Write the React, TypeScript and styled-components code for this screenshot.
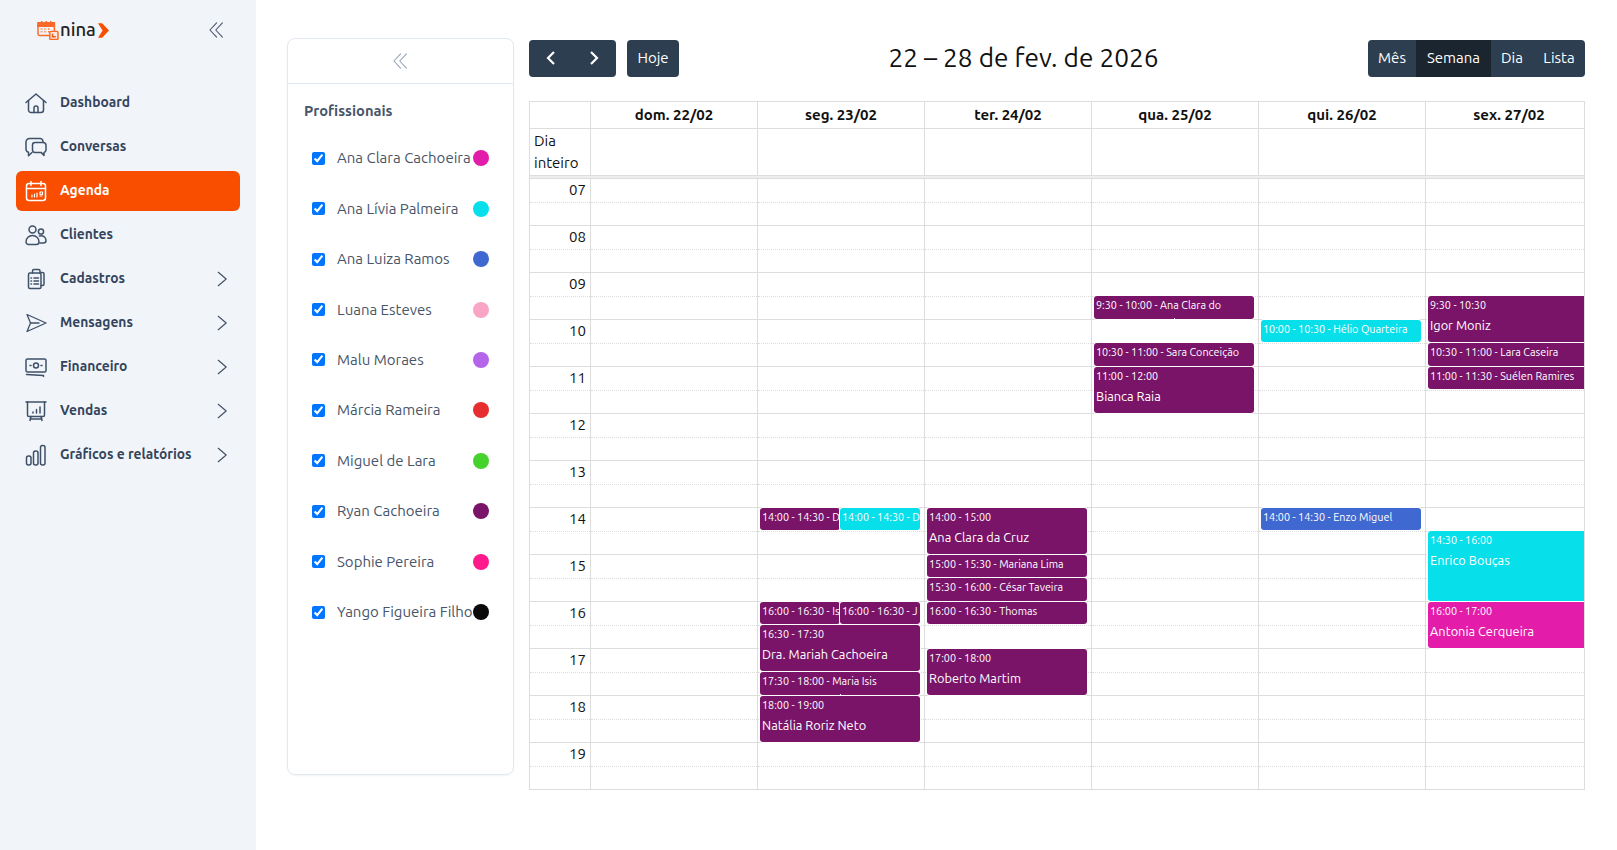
import React from 'react'
import styled, { createGlobalStyle } from 'styled-components'

const HOUR = 47
const FONT = `"Ubuntu", "Noto Sans", sans-serif`
const PURPLE = '#7a1469'
const CYAN = '#07dfea'
const BLUE = '#3f68d1'
const PINK = '#e31caa'

const GlobalStyle = createGlobalStyle`
  html, body {
    margin: 0;
    padding: 0;
    background: #fff;
    font-family: ${FONT};
  }
  * {
    box-sizing: border-box;
  }
`
const Shell = styled.div`
  display: flex;
  min-height: 100vh;
`
const Sidebar = styled.aside`
  width: 256px;
  flex-shrink: 0;
  background: #f1f5f9;
  padding: 0 16px;
`
const SideTop = styled.div`
  display: flex;
  align-items: center;
  justify-content: space-between;
  height: 60px;
  padding: 0 13px 0 21px;
  margin-bottom: 22.5px;
`
const Logo = styled.div`
  display: flex;
  align-items: center;
  gap: 2px;
  color: #222;
  font-size: 18.5px;
  font-weight: 500;
  line-height: 1;
  span {
    margin-left: -1px;
    padding-bottom: 2px;
  }
`
const Nav = styled.nav`
  display: flex;
  flex-direction: column;
  gap: 4px;
`
const NavRow = styled.div<{ $active?: boolean }>`
  display: flex;
  align-items: center;
  gap: 12px;
  height: 40px;
  padding: 0 8px;
  border-radius: 6px;
  font-size: 13.8px;
  font-weight: 600;
  color: ${(p) => (p.$active ? '#fff' : '#33445c')};
  background: ${(p) => (p.$active ? '#f94d00' : 'transparent')};
  svg {
    flex-shrink: 0;
  }
`
const NavLabel = styled.span`
  flex: 1;
  padding-bottom: 2px;
`
const Main = styled.main`
  flex: 1;
  display: flex;
  align-items: flex-start;
  gap: 15px;
  padding: 38px 32px 0 31px;
`
const Panel = styled.section`
  width: 227px;
  height: 737px;
  flex-shrink: 0;
  border: 1px solid #e2e8f0;
  border-radius: 8px;
  box-shadow: 0 1px 2px rgba(15, 23, 42, 0.05);
`
const PanelHead = styled.div`
  display: flex;
  align-items: center;
  justify-content: center;
  height: 45px;
  border-bottom: 1px solid #e2e8f0;
`
const PanelTitle = styled.h3`
  margin: 0;
  padding: 16px 16px 0;
  height: 49px;
  font-size: 14.7px;
  line-height: 21px;
  font-weight: 600;
  color: #475569;
`
const ProList = styled.ul`
  list-style: none;
  margin: 0;
  padding: 0 24px;
`
const ProRow = styled.li`
  display: flex;
  align-items: center;
  gap: 12px;
  height: 50.45px;
  font-size: 15px;
  color: #475569;
  input {
    margin: 0;
    width: 13px;
    height: 13px;
    flex-shrink: 0;
  }
`
const ProName = styled.span`
  flex: 1;
  white-space: nowrap;
  min-width: 0;
  padding-bottom: 1px;
`
const ProDot = styled.span<{ $color: string }>`
  width: 16px;
  height: 16px;
  flex-shrink: 0;
  border-radius: 50%;
  background: ${(p) => p.$color};
`
const Calendar = styled.div`
  flex: 1;
  min-width: 0;
  padding-top: 2px;
`
const Toolbar = styled.div`
  display: flex;
  align-items: center;
  justify-content: space-between;
  height: 37px;
  margin-bottom: 24px;
`
const ToolGroup = styled.div`
  display: flex;
  gap: 11px;
`
const BtnGroup = styled.div`
  display: flex;
  border-radius: 4px;
  overflow: hidden;
`
const Btn = styled.button<{ $active?: boolean; $w: number; $round?: boolean }>`
  display: flex;
  align-items: center;
  justify-content: center;
  width: ${(p) => p.$w}px;
  height: 37px;
  padding: 0 0 2px;
  border: 0;
  border-radius: ${(p) => (p.$round ? '4px' : '0')};
  font-family: ${FONT};
  font-size: 15px;
  color: #fff;
  background: ${(p) => (p.$active ? '#1a252f' : '#2c3e50')};
`
const Title = styled.h2`
  margin: 0 0 2px;
  font-size: 26.25px;
  font-weight: 400;
  color: #111;
`
const Table = styled.div`
  border: 1px solid #ddd;
  color: #111;
`
const Row = styled.div<{ $h: number; $line?: boolean }>`
  display: grid;
  grid-template-columns: 61px repeat(5, 167px) 1fr;
  height: ${(p) => p.$h}px;
  border-bottom: ${(p) => (p.$line ? '1px solid #ddd' : '0')};
`
const HeadCell = styled.div`
  display: flex;
  align-items: center;
  justify-content: center;
  padding-bottom: 1px;
  border-right: 1px solid #ddd;
  font-size: 15px;
  font-weight: 700;
  &:last-child {
    padding-left: 8px;
    border-right: 0;
  }
`
const AllDayCell = styled.div`
  border-right: 1px solid #ddd;
  &:last-child {
    border-right: 0;
  }
`
const AllDayLabel = styled(AllDayCell)`
  padding: 1px 4px;
  font-size: 15px;
  line-height: 22px;
`
const Divider = styled.div`
  height: 3px;
  background: #eee;
  border-top: 1px solid #ddd;
`
const Body = styled.div`
  display: grid;
  grid-template-columns: 61px repeat(5, 167px) 1fr;
  margin-top: 0.3px;
`
const Slot = styled.div<{ $half: boolean }>`
  height: ${HOUR / 2}px;
  border-top: 1px ${(p) => (p.$half ? 'dotted' : 'solid')} #ddd;
`
const TimeCol = styled.div`
  border-right: 1px solid #ddd;
`
const TimeSlot = styled(Slot)`
  padding-right: 4px;
  text-align: right;
  font-size: 15px;
  line-height: 22px;
`
const DayCol = styled.div`
  position: relative;
  overflow: hidden;
  border-right: 1px solid #ddd;
  &:last-child {
    border-right: 0;
  }
`
const Ev = styled.div<{ $color: string; $tick?: boolean }>`
  position: absolute;
  overflow: hidden;
  padding: 0 2px;
  border-radius: 3px;
  box-shadow: 0 0 0 1px #fff;
  color: #fff;
  background: ${(p) => p.$color};
  white-space: nowrap;
  &::after {
    content: '';
    display: ${(p) => (p.$tick ? 'block' : 'none')};
    position: absolute;
    left: 50%;
    bottom: 0;
    width: 1px;
    height: 1px;
    background: #fff;
  }
`
const EvTime = styled.div`
  font-size: 10.8px;
  line-height: 18px;
`
const EvName = styled.div`
  font-size: 12.8px;
  line-height: 21px;
  margin-top: 1px;
`

const Icon: React.FC<{ children: React.ReactNode; color?: string; size?: number; w?: number }> = ({
  children,
  color = '#3f5069',
  size = 24,
  w = 1.5,
}) => (
  <svg
    width={size}
    height={size}
    viewBox="0 0 24 24"
    fill="none"
    stroke={color}
    strokeWidth={w}
    strokeLinecap="round"
    strokeLinejoin="round"
  >
    {children}
  </svg>
)

const HomeIcon = () => (
  <Icon>
    <path d="M2 11.500 12 3l10 8.500" />
    <path d="M4.500 9.500V19a2.500 2.500 0 0 0 2.500 2.500h10a2.500 2.500 0 0 0 2.500-2.500V9.500" />
    <path d="M10 21.500V17a2 2 0 0 1 4 0v4.500" />
  </Icon>
)
const ChatIcon = () => (
  <Icon>
    <path d="M19 7V6.500A3 3 0 0 0 16 3.500H5.500A3.500 3.500 0 0 0 2 7v7a3.500 3.500 0 0 0 2.500 3.300v3.400l3.500-3.200" />
    <path d="M11 7.500h8A3 3 0 0 1 22 10.500v4.500a2.500 2.500 0 0 1-2 2.400v3l-3-3h-6A2.500 2.500 0 0 1 8.500 15v-5A2.500 2.500 0 0 1 11 7.500z" />
  </Icon>
)
const CalendarIcon = () => (
  <Icon color="#fff">
    <rect x="2.500" y="4.500" width="19" height="17" rx="2.500" />
    <path d="M2.500 9.500h19M7 2.500v4M17 2.500v4" />
    <path d="M8 16v2M10.500 15v3M13 14v4M16 13h2.500v2.500H16zM16 17h2" strokeWidth="1.200" />
  </Icon>
)
const UsersIcon = () => (
  <Icon>
    <circle cx="8.500" cy="6.500" r="3.500" />
    <circle cx="17" cy="8.500" r="2.600" />
    <path d="M2 19c0-4 3-6.500 6.500-6.500S15 15 15 19c0 1.500-1.200 2.500-2.500 2.500h-8C3.200 21.500 2 20.500 2 19z" />
    <path d="M15.500 13c3.500-.8 6.500 1.200 6.500 4.500 0 1.500-.8 2.500-2.500 2.500h-3.500" />
  </Icon>
)
const ClipboardIcon = () => (
  <Icon>
    <path d="M17 5.500h1.500a1.500 1.500 0 0 1 1.500 1.500v10a1.500 1.500 0 0 1-1.500 1.500H17" />
    <rect x="4.500" y="6" width="12.500" height="15.500" rx="1.500" />
    <path d="M8.500 6V4A1.500 1.500 0 0 1 10 2.500h4.500A1.500 1.500 0 0 1 16 4v2" />
    <path d="M7 11h.5M10 11h4.500M7 14h.5M10 14h4.500M7 17h.5M10 17h4.500" />
  </Icon>
)
const SendIcon = () => (
  <Icon w={1.300}>
    <path d="M3 3.500 22 12 3 20.500 6.500 12z" />
    <path d="M6.500 12H15" />
  </Icon>
)
const MoneyIcon = () => (
  <Icon>
    <rect x="2" y="4" width="20" height="13" rx="1.500" />
    <circle cx="12" cy="10.500" r="2.500" />
    <path d="M6 10.500h1M17 10.500h1" />
    <path d="M2.500 19.500 19.500 20.500v1" />
  </Icon>
)
const BoardIcon = () => (
  <Icon>
    <path d="M2 3h20" />
    <path d="M3.500 3v13a1.500 1.500 0 0 0 1.500 1.500h14a1.500 1.500 0 0 0 1.500-1.500V3" />
    <path d="M7 17.500 6 21.500M17 17.500l1 4M6 20h12" />
    <path d="M9 13v1M12.500 10.500V14M16 8v6" />
  </Icon>
)
const BarsIcon = () => (
  <Icon>
    <rect x="2.500" y="13" width="4.500" height="9" rx="2" />
    <rect x="9.500" y="8" width="4.500" height="14" rx="2" />
    <rect x="16.500" y="2.500" width="4.500" height="19.500" rx="2" />
  </Icon>
)
const ChevronRight = () => (
  <Icon color="#475569" size={20} w={1.500}>
    <path d="m7.500 4 9.500 8-9.500 8" />
  </Icon>
)
const DoubleChevron = ({ color }: { color: string }) => (
  <Icon color={color} size={20} w={1.300}>
    <path d="M11.500 3.500 3.500 12l8 8.500" />
    <path d="M18.500 3.500 10.500 12l8 8.500" />
  </Icon>
)
const NavArrow = ({ d }: { d: string }) => (
  <svg width="14" height="16" viewBox="0 0 14 16" fill="none" stroke="#fff" strokeWidth="2.200">
    <path d={d} />
  </svg>
)
const LogoMark = () => (
  <svg width="22" height="20" viewBox="0 0 24 22" fill="none" stroke="#f9692a" strokeWidth="1.600">
    <rect x="1" y="3" width="18" height="14" rx="1.500" />
    <path d="M1 3h18v4H1z" fill="#f9692a" />
    <path d="M5 1v3M10 1v3M15 1v3" />
    <path d="M4 10h2M8 10h2M12 10h2M4 13h2M8 13h2M12 13h2" strokeDasharray="1 .6" />
    <rect x="14" y="12.500" width="9" height="9" rx="1" fill="#fde6d9" />
    <path d="M17 15v3.500h3.500" stroke="#e85a1c" />
  </svg>
)
const LogoArrow = () => (
  <svg width="11" height="15" viewBox="0 0 12 16">
    <path d="M0 0h4.500L12 8l-7.500 8H0l5-8z" fill="#f94d00" />
  </svg>
)

const navItems: { label: string; icon: React.ReactNode; active?: boolean; more?: boolean }[] = [
  { label: 'Dashboard', icon: <HomeIcon /> },
  { label: 'Conversas', icon: <ChatIcon /> },
  { label: 'Agenda', icon: <CalendarIcon />, active: true },
  { label: 'Clientes', icon: <UsersIcon /> },
  { label: 'Cadastros', icon: <ClipboardIcon />, more: true },
  { label: 'Mensagens', icon: <SendIcon />, more: true },
  { label: 'Financeiro', icon: <MoneyIcon />, more: true },
  { label: 'Vendas', icon: <BoardIcon />, more: true },
  { label: 'Gráficos e relatórios', icon: <BarsIcon />, more: true },
]

const pros = [
  { name: 'Ana Clara Cachoeira', color: PINK },
  { name: 'Ana Lívia Palmeira', color: CYAN },
  { name: 'Ana Luiza Ramos', color: BLUE },
  { name: 'Luana Esteves', color: '#f8a5c6' },
  { name: 'Malu Moraes', color: '#b565ea' },
  { name: 'Márcia Rameira', color: '#e62e2e' },
  { name: 'Miguel de Lara', color: '#46d22c' },
  { name: 'Ryan Cachoeira', color: PURPLE },
  { name: 'Sophie Pereira', color: '#ff1a8c' },
  { name: 'Yango Figueira Filho', color: '#0a0a0a' },
]

const days = ['dom. 22/02', 'seg. 23/02', 'ter. 24/02', 'qua. 25/02', 'qui. 26/02', 'sex. 27/02']
const hours = ['07', '08', '09', '10', '11', '12', '13', '14', '15', '16', '17', '18', '19']

type CalEvent = {
  day: number
  start: number
  end: number
  time: string
  name: string
  color?: string
  half?: 0 | 1
  tick?: boolean
}

const events: CalEvent[] = [
  { day: 1, start: 14, end: 14.5, time: '14:00 - 14:30', name: 'D', half: 0 },
  { day: 1, start: 14, end: 14.5, time: '14:00 - 14:30', name: 'D', half: 1, color: CYAN },
  { day: 1, start: 16, end: 16.5, time: '16:00 - 16:30', name: 'Is', half: 0 },
  { day: 1, start: 16, end: 16.5, time: '16:00 - 16:30', name: 'J', half: 1 },
  { day: 1, start: 16.5, end: 17.5, time: '16:30 - 17:30', name: 'Dra. Mariah Cachoeira' },
  { day: 1, start: 17.5, end: 18, time: '17:30 - 18:00', name: 'Maria Isis', tick: true },
  { day: 1, start: 18, end: 19, time: '18:00 - 19:00', name: 'Natália Roriz Neto' },
  { day: 2, start: 14, end: 15, time: '14:00 - 15:00', name: 'Ana Clara da Cruz' },
  { day: 2, start: 15, end: 15.5, time: '15:00 - 15:30', name: 'Mariana Lima' },
  { day: 2, start: 15.5, end: 16, time: '15:30 - 16:00', name: 'César Taveira' },
  { day: 2, start: 16, end: 16.5, time: '16:00 - 16:30', name: 'Thomas' },
  { day: 2, start: 17, end: 18, time: '17:00 - 18:00', name: 'Roberto Martim' },
  { day: 3, start: 9.5, end: 10, time: '9:30 - 10:00', name: 'Ana Clara do', tick: true },
  { day: 3, start: 10.5, end: 11, time: '10:30 - 11:00', name: 'Sara Conceição' },
  { day: 3, start: 11, end: 12, time: '11:00 - 12:00', name: 'Bianca Raia' },
  { day: 4, start: 10, end: 10.5, time: '10:00 - 10:30', name: 'Hélio Quarteira', color: CYAN },
  { day: 4, start: 14, end: 14.5, time: '14:00 - 14:30', name: 'Enzo Miguel', color: BLUE },
  { day: 5, start: 9.5, end: 10.5, time: '9:30 - 10:30', name: 'Igor Moniz' },
  { day: 5, start: 10.5, end: 11, time: '10:30 - 11:00', name: 'Lara Caseira' },
  { day: 5, start: 11, end: 11.5, time: '11:00 - 11:30', name: 'Suélen Ramires' },
  { day: 5, start: 14.5, end: 16, time: '14:30 - 16:00', name: 'Enrico Bouças', color: CYAN },
  { day: 5, start: 16, end: 17, time: '16:00 - 17:00', name: 'Antonia Cerqueira', color: PINK },
]

const slots = Array.from({ length: 26 }, (_, i) => i)

const EventBox = ({ ev }: { ev: CalEvent }) => {
  const long = ev.end - ev.start >= 1
  const style = {
    top: (ev.start - 7) * HOUR + 0.7,
    height: (ev.end - ev.start) * HOUR - 1,
    left: ev.half === 1 ? 82 : 2,
    width: ev.half === undefined ? 160 : 80,
  }
  return (
    <Ev $color={ev.color || PURPLE} $tick={ev.tick} style={style}>
      {long ? (
        <>
          <EvTime>{ev.time}</EvTime>
          <EvName>{ev.name}</EvName>
        </>
      ) : (
        <EvTime>
          {ev.time} - {ev.name}
        </EvTime>
      )}
    </Ev>
  )
}

const App = () => {
  return (
    <Shell>
      <GlobalStyle />
      <Sidebar>
        <SideTop>
          <Logo>
            <LogoMark />
            <span>nina</span>
            <LogoArrow />
          </Logo>
          <DoubleChevron color="#475569" />
        </SideTop>
        <Nav>
          {navItems.map((item) => (
            <NavRow key={item.label} $active={item.active}>
              {item.icon}
              <NavLabel>{item.label}</NavLabel>
              {item.more && <ChevronRight />}
            </NavRow>
          ))}
        </Nav>
      </Sidebar>
      <Main>
        <Panel>
          <PanelHead>
            <DoubleChevron color="#94a3b8" />
          </PanelHead>
          <PanelTitle>Profissionais</PanelTitle>
          <ProList>
            {pros.map((p) => (
              <ProRow key={p.name}>
                <input type="checkbox" checked readOnly />
                <ProName>{p.name}</ProName>
                <ProDot $color={p.color} />
              </ProRow>
            ))}
          </ProList>
        </Panel>
        <Calendar>
          <Toolbar>
            <ToolGroup>
              <BtnGroup>
                <Btn $w={43.5}>
                  <NavArrow d="M10 2 4 8l6 6" />
                </Btn>
                <Btn $w={43.5}>
                  <NavArrow d="m4 2 6 6-6 6" />
                </Btn>
              </BtnGroup>
              <Btn $w={52} $round>
                Hoje
              </Btn>
            </ToolGroup>
            <Title>22 – 28 de fev. de 2026</Title>
            <BtnGroup>
              <Btn $w={48}>Mês</Btn>
              <Btn $w={75} $active>
                Semana
              </Btn>
              <Btn $w={42}>Dia</Btn>
              <Btn $w={52}>Lista</Btn>
            </BtnGroup>
          </Toolbar>
          <Table>
            <Row $h={27} $line>
              <HeadCell />
              {days.map((d) => (
                <HeadCell key={d}>{d}</HeadCell>
              ))}
            </Row>
            <Row $h={46}>
              <AllDayLabel>
                Dia
                <br />
                inteiro
              </AllDayLabel>
              {days.map((d) => (
                <AllDayCell key={d} />
              ))}
            </Row>
            <Divider />
            <Body>
              <TimeCol>
                {slots.map((i) => (
                  <TimeSlot key={i} $half={i % 2 === 1}>
                    {i % 2 === 0 ? hours[i / 2] : ''}
                  </TimeSlot>
                ))}
              </TimeCol>
              {days.map((d, di) => (
                <DayCol key={d}>
                  {slots.map((i) => (
                    <Slot key={i} $half={i % 2 === 1} />
                  ))}
                  {events
                    .filter((ev) => ev.day === di)
                    .map((ev) => (
                      <EventBox key={`${ev.start}-${ev.name}`} ev={ev} />
                    ))}
                </DayCol>
              ))}
            </Body>
          </Table>
        </Calendar>
      </Main>
    </Shell>
  )
}

export default App
